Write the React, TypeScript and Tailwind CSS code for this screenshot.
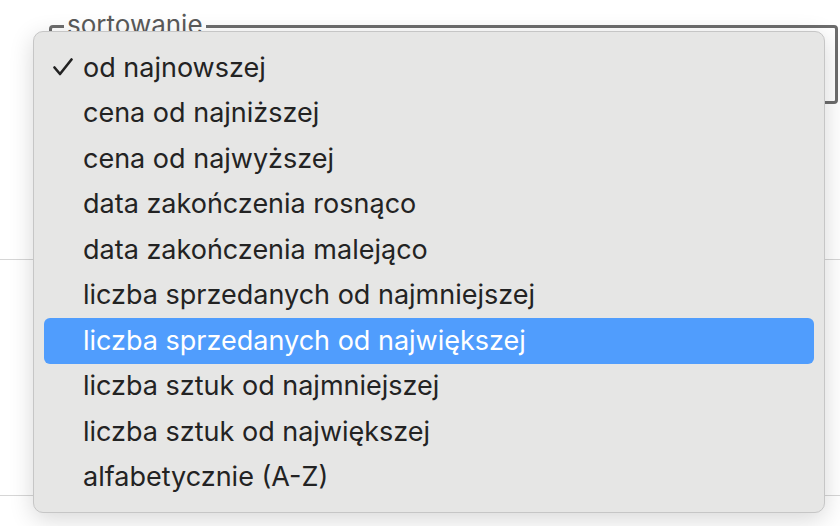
import { Fragment } from 'react'

const options = [
  'od najnowszej',
  'cena od najniższej',
  'cena od najwyższej',
  'data zakończenia rosnąco',
  'data zakończenia malejąco',
  'liczba sprzedanych od najmniejszej',
  'liczba sprzedanych od największej',
  'liczba sztuk od najmniejszej',
  'liczba sztuk od największej',
  'alfabetycznie (A-Z)',
]

const selected = 0
const hovered = 6

function Check() {
  return (
    <svg width="20" height="18" viewBox="0 0 20 18" fill="none" className="absolute left-[9px] top-[13px]">
      <path d="M1.5 9.5 L7 16 L18.5 1.5" stroke="#222" strokeWidth="2.6" strokeLinecap="round" strokeLinejoin="round" />
    </svg>
  )
}

export default function App() {
  return (
    <div className="relative w-[840px] h-[526px] overflow-hidden bg-white font-['Inter','Noto_Sans',sans-serif]">
      {/* Sort fieldset behind the open menu */}
      <fieldset className="ml-[49px] mt-[11.5px] w-[789px] h-[92.5px] border-[3px] border-[#6d6d6d] rounded-[4px] px-[12px]">
        <legend className="px-[3px] pb-[4px] text-[26px] leading-[26px] text-[#5a5a5a]">sortowanie</legend>
      </fieldset>

      <div className="mt-[155px] border-t border-[#d6d6d6]" />
      <div className="mt-[235px] border-t border-[#d6d6d6]" />

      {/* Native-style dropdown menu */}
      <div className="absolute left-[33px] top-[31px] w-[792px] h-[482px] rounded-[10px] bg-[#e6e6e5] border border-[#c6c6c6] shadow-[0_6px_24px_rgba(0,0,0,0.16)] px-[10px] pt-[13px]">
        {options.map((label, i) => (
          <Fragment key={label}>
            <div
              className={
                i === hovered
                  ? 'relative flex h-[45.5px] items-center rounded-[6px] bg-[#509dfd] pl-[39px] text-[27px] text-white'
                  : 'relative flex h-[45.5px] items-center rounded-[6px] pl-[39px] text-[27px] text-[#232323]'
              }
            >
              {i === selected && <Check />}
              {label}
            </div>
          </Fragment>
        ))}
      </div>
    </div>
  )
}
